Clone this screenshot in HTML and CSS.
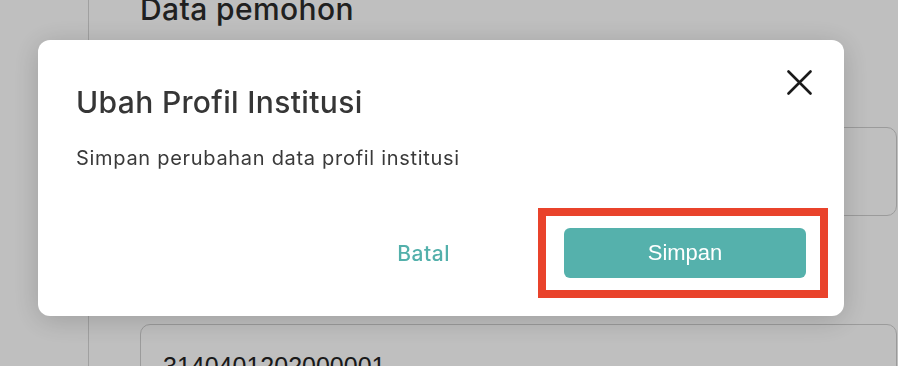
FILE: index.html
```html
<!DOCTYPE html>
<html lang="id">
<head>
<meta charset="utf-8">
<title>Ubah Profil Institusi</title>
<link rel="stylesheet" href="styles.css">
</head>
<body>
<div class="page">
  <aside class="sidebar"></aside>
  <main class="content">
    <h2 class="section-title">Data pemohon</h2>
    <div class="field field-top"></div>
    <div class="field field-bottom"><span class="field-value">3140401202000001</span></div>
  </main>
</div>

<div class="overlay">
  <div class="modal" role="dialog" aria-labelledby="modal-title">
    <div class="modal-header">
      <h1 class="modal-title" id="modal-title">Ubah Profil Institusi</h1>
      <button class="close-btn" aria-label="Tutup">
        <svg width="25" height="25" viewBox="0 0 25 25" fill="none">
          <path d="M1.5 1.5 L23.5 23.5 M23.5 1.5 L1.5 23.5" stroke="#1a1a1a" stroke-width="2.6" stroke-linecap="round"/>
        </svg>
      </button>
    </div>
    <p class="modal-text">Simpan perubahan data profil institusi</p>
    <div class="modal-footer">
      <button class="btn-cancel">Batal</button>
      <button class="btn-save">Simpan</button>
    </div>
    <div class="highlight"></div>
  </div>
</div>
</body>
</html>
```

FILE: styles.css
```css
* { box-sizing: border-box; }
html, body { margin: 0; padding: 0; }
body {
  width: 898px;
  height: 366px;
  overflow: hidden;
  background: #ffffff;
  font-family: "Inter", "Liberation Sans", sans-serif;
}

.page {
  display: flex;
  height: 366px;
}
.sidebar {
  width: 89px;
  flex: none;
  border-right: 1px solid #d6d6d6;
}
.content {
  flex: 1;
  padding-left: 51px;
  display: flex;
  flex-direction: column;
}
.section-title {
  margin: -9px 0 0 0;
  font-size: 30px;
  line-height: 36px;
  font-weight: 500;
  letter-spacing: 0.4px;
  color: #2b2b2b;
}
.field {
  border: 1px solid #cfcfcf;
  border-radius: 10px;
  margin-right: 1px;
  flex: none;
}
.field-top {
  margin-top: 100px;
  height: 89px;
}
.field-bottom {
  margin-top: 108px;
  height: 80px;
  padding: 27px 0 0 22px;
}
.field-value {
  font-family: "Liberation Sans", sans-serif;
  font-size: 25px;
  color: #222;
}

.overlay {
  position: fixed;
  inset: 0;
  background: rgba(0, 0, 0, 0.25);
  display: flex;
  align-items: flex-start;
  padding: 40px 0 0 38px;
}
.modal {
  position: relative;
  width: 806px;
  height: 276px;
  background: #fff;
  border-radius: 12px;
  box-shadow: 0 4px 28px rgba(0, 0, 0, 0.18);
  padding: 30px 32px 0 38px;
  display: flex;
  flex-direction: column;
}
.modal-header {
  display: flex;
  justify-content: space-between;
  align-items: flex-start;
}
.modal-title {
  margin: 14px 0 0 0;
  font-size: 30px;
  line-height: 36px;
  font-weight: 500;
  letter-spacing: 0.35px;
  color: #363636;
}
.close-btn {
  border: 0;
  background: none;
  padding: 0;
  width: 25px;
  height: 25px;
  display: block;
  cursor: pointer;
}
.close-btn svg { display: block; }
.modal-text {
  margin: 26px 0 0 0;
  font-size: 20px;
  line-height: 24px;
  letter-spacing: 0.7px;
  color: #3a3a3a;
}
.modal-footer {
  margin-top: 58px;
  display: flex;
  justify-content: flex-end;
  align-items: center;
  padding-right: 6px;
}
.btn-cancel {
  border: 0;
  background: none;
  font-family: "Inter", "Liberation Sans", sans-serif;
  font-size: 21px;
  font-weight: 500;
  letter-spacing: 0.5px;
  color: #53b0ab;
  padding: 0;
  margin-right: 114px;
  cursor: pointer;
}
.btn-save {
  width: 242px;
  height: 50px;
  border: 0;
  border-radius: 6px;
  background: #55b1ac;
  color: #fff;
  font-family: "Liberation Sans", sans-serif;
  font-size: 22px;
  cursor: pointer;
}
.highlight {
  position: absolute;
  left: 500px;
  top: 168px;
  width: 290px;
  height: 90px;
  border: 8px solid #e9432b;
  pointer-events: none;
}
```
